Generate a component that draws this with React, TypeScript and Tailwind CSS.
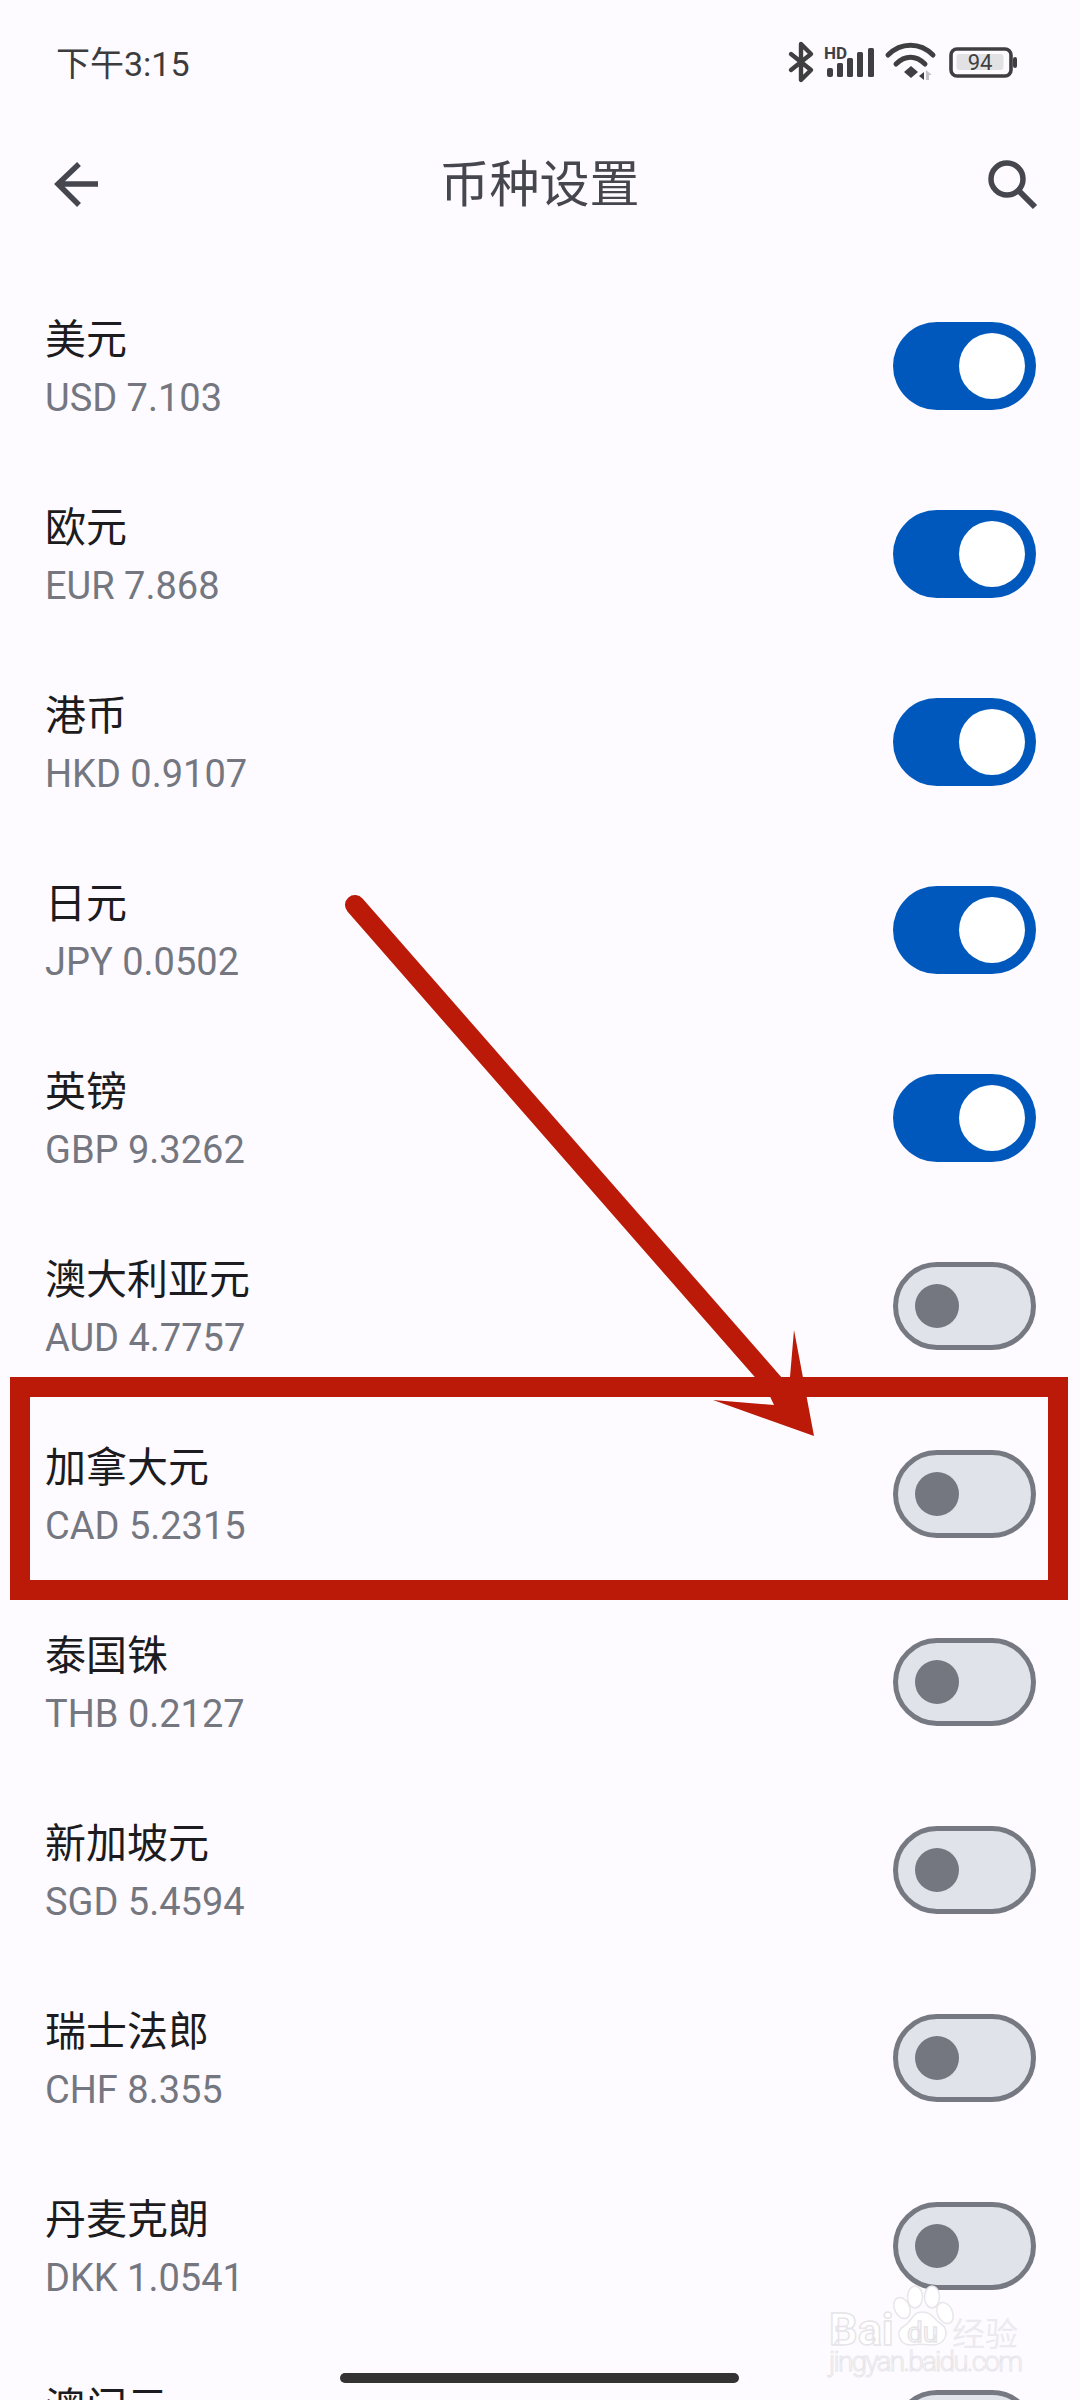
const rows: [string, string, boolean][] = [
  ["美元", "USD 7.103", true],
  ["欧元", "EUR 7.868", true],
  ["港币", "HKD 0.9107", true],
  ["日元", "JPY 0.0502", true],
  ["英镑", "GBP 9.3262", true],
  ["澳大利亚元", "AUD 4.7757", false],
  ["加拿大元", "CAD 5.2315", false],
  ["泰国铢", "THB 0.2127", false],
  ["新加坡元", "SGD 5.4594", false],
  ["瑞士法郎", "CHF 8.355", false],
  ["丹麦克朗", "DKK 1.0541", false],
  ["澳门元", "MOP 0.8812", false],
];

function Switch({ on }: { on: boolean }) {
  if (on) {
    return (
      <div className="flex h-[88px] w-[143px] shrink-0 items-center justify-end rounded-full bg-[#0058bc] pr-[11px]">
        <div className="h-[66px] w-[66px] rounded-full bg-white" />
      </div>
    );
  }
  return (
    <div className="flex h-[88px] w-[143px] shrink-0 items-center rounded-full border-[5px] border-[#767982] bg-[#e0e3ea] pl-[17px]">
      <div className="h-[44px] w-[44px] rounded-full bg-[#747780]" />
    </div>
  );
}

function StatusIcons() {
  return (
    <svg width="240" height="50" viewBox="0 0 240 50" className="shrink-0">
      <path d="M6 16 L26 32 L16 42 V6 L26 16 L6 32" fill="none" stroke="#3f3f42" strokeWidth="4.4" strokeLinecap="round" strokeLinejoin="round" />
      <text x="39" y="21" fontFamily="Roboto, sans-serif" fontWeight="700" fontSize="17" fill="#3f3f42">HD</text>
      <rect x="42" y="30" width="6" height="9" rx="2" fill="#3f3f42" />
      <rect x="52" y="25" width="6" height="14" rx="1.5" fill="#3f3f42" />
      <rect x="62" y="20" width="6" height="19" rx="1.5" fill="#3f3f42" />
      <rect x="72" y="14" width="6" height="25" rx="1.5" fill="#3f3f42" />
      <rect x="83" y="10" width="6" height="29" rx="1.5" fill="#3f3f42" />
      <path d="M103 17 C116 4 135 4 148 17" fill="none" stroke="#3f3f42" strokeWidth="5" strokeLinecap="round" />
      <path d="M111 26 C120 17 131 17 140 26" fill="none" stroke="#3f3f42" strokeWidth="5" strokeLinecap="round" />
      <path d="M119 34 L126 28 L133 34 L126 40 Z" fill="#3f3f42" />
      <path d="M139 42 V34 L134 38 Z" fill="#3f3f42" />
      <path d="M141 42 V32 L147 37 H144 V42 Z" fill="#c4c4c6" />
      <rect x="166" y="11" width="60" height="27" rx="6" fill="none" stroke="#3f3f42" strokeWidth="3.6" />
      <rect x="171.500" y="16" width="47" height="16" rx="3" fill="#e2e2e5" />
      <text x="195" y="32" textAnchor="middle" fontFamily="Roboto, sans-serif" fontSize="22" fill="#3f3f42">94</text>
      <rect x="228" y="19" width="4" height="11" rx="2" fill="#3f3f42" />
    </svg>
  );
}

function Watermark() {
  return (
    <svg className="absolute left-[810px] top-[2270px]" width="240" height="120" viewBox="0 0 240 120">
      <g fill="#ffffff" stroke="#e8e6ea" strokeWidth="1.5">
        <ellipse cx="105" cy="27" rx="7.500" ry="11" />
        <ellipse cx="122" cy="27" rx="7.500" ry="11" />
        <ellipse cx="92" cy="38" rx="7.500" ry="11" transform="rotate(-25 92 38)" />
        <ellipse cx="135" cy="43" rx="7.500" ry="11" transform="rotate(-25 135 43)" />
        <path d="M112 42 C123 42 124 50 131 54 C140 59 137 75 122 75 C115 75 110 73 102 75 C90 76 84 62 94 56 C102 52 102 42 112 42 Z" />
      </g>
      <g fill="#ffffff" stroke="#e6e4e8" strokeWidth="1.4" fontFamily="Roboto, sans-serif">
        <text x="19" y="75" fontSize="45" fontWeight="700">Bai</text>
        <text x="97" y="72" fontSize="28" fontWeight="400" fill="#fdfbff">du</text>
        <text x="19" y="101" fontSize="28" fontWeight="300" fill="#fdfbff" textLength="194" stroke="#e8e6ea" strokeWidth="1">jingyan.baidu.com</text>
      </g>
      <text x="142" y="76" fontSize="33" fill="#eceaee" fontFamily='"Noto Sans CJK SC", sans-serif'>经验</text>
    </svg>
  );
}

export default function App() {
  return (
    <div
      className="relative flex h-[2400px] w-[1080px] flex-col overflow-hidden bg-[#fdfbff]"
      style={{ fontFamily: 'Roboto, "Noto Sans CJK SC", sans-serif' }}
    >
      <div className="flex h-[126px] shrink-0 items-center justify-between pl-[56px] pr-0">
        <span className="mt-[1px] text-[34px] leading-none text-[#3c3c3e]">下午3:15</span>
        <div className="mr-[55px]">
          <StatusIcons />
        </div>
      </div>

      <div className="relative flex h-[116px] shrink-0 items-center justify-between pl-[52px] pr-[42px]">
        <svg width="48" height="48" viewBox="0 0 48 48" className="shrink-0">
          <path d="M46 24 H6 M27 4 L6 24 L27 45" fill="none" stroke="#46464e" strokeWidth="5.5" />
        </svg>
        <span className="mr-[7px] mt-[2px] text-[50px] leading-none text-[#46464e]">币种设置</span>
        <svg width="52" height="52" viewBox="0 0 52 52" className="shrink-0">
          <circle cx="21" cy="21" r="16" fill="none" stroke="#46464e" strokeWidth="5.5" />
          <path d="M33 33 L49 49" fill="none" stroke="#46464e" strokeWidth="6" />
        </svg>
      </div>

      <div className="mt-[30px] flex flex-col">
        {rows.map(([name, rate, on]) => (
          <div key={rate} className="flex h-[188px] shrink-0 items-center justify-between pl-[45px] pr-[44px]">
            <div className="flex flex-col gap-[16px] pt-[6px]">
              <span className="text-[41px] leading-[42px] text-[#1c1c20]">{name}</span>
              <span className="text-[38px] leading-[42px] text-[#747780]">{rate}</span>
            </div>
            <Switch on={on} />
          </div>
        ))}
      </div>

      <div className="absolute left-[10px] top-[1377px] h-[223px] w-[1058px] border-[20px] border-[#bb1a08]" />

      <svg className="absolute left-0 top-0" width="1080" height="2400" viewBox="0 0 1080 2400">
        <path d="M355 905 L775 1385" stroke="#bb1a08" strokeWidth="20" strokeLinecap="round" fill="none" />
        <path d="M794 1330 L814 1436 L713 1400 L774 1405 L767 1390 L785 1382 L790 1377 Z" fill="#bb1a08" />
      </svg>

      <Watermark />

      <div className="absolute bottom-[17px] left-[340px] h-[10px] w-[399px] rounded-full bg-[#333333]" />
    </div>
  );
}
